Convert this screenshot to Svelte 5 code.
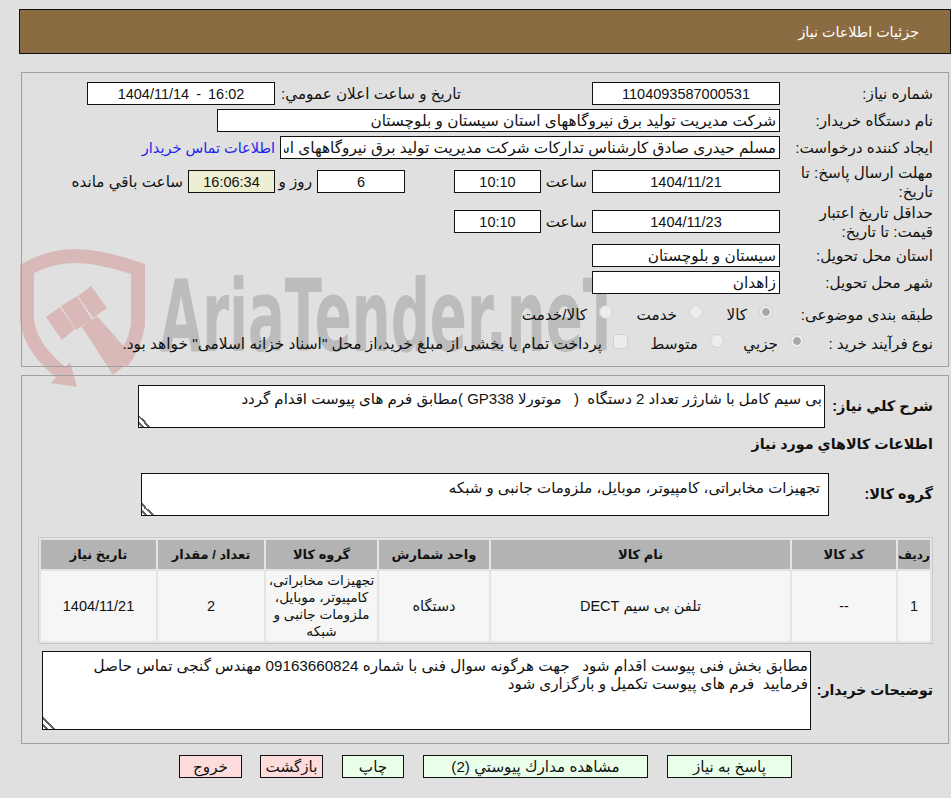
<script>
    const columns = [
        { title: 'ردیف', width: 32, lines: ['1'] },
        { title: 'کد کالا', width: 104, lines: ['--'] },
        { title: 'نام کالا', width: 299, lines: ['تلفن بی سیم DECT'] },
        { title: 'واحد شمارش', width: 110, lines: ['دستگاه'] },
        { title: 'گروه کالا', width: 111, lines: ['تجهیزات مخابراتی،', 'کامپیوتر، موبایل،', 'ملزومات جانبی و', 'شبکه'] },
        { title: 'تعداد / مقدار', width: 106, lines: ['2'] },
        { title: 'تاریخ نیاز', width: 115, lines: ['1404/11/21'] }
    ];

    const buttons = [
        { label: 'پاسخ به نیاز', width: 125, gap: 19, kind: 'green' },
        { label: 'مشاهده مدارك پيوستي (2)', width: 225, gap: 19, kind: 'green' },
        { label: 'چاپ', width: 62, gap: 19, kind: 'green' },
        { label: 'بازگشت', width: 63, gap: 18, kind: 'red' },
        { label: 'خروج', width: 63, gap: 0, kind: 'red' }
    ];

    const description = 'بی سیم کامل با شارژر تعداد 2 دستگاه  (   موتورلا GP338 )مطابق فرم های پیوست اقدام گردد';
    const group = 'تجهیزات مخابراتی، کامپیوتر، موبایل، ملزومات جانبی و شبکه';
    const notes = 'مطابق بخش فنی پیوست اقدام شود   جهت هرگونه سوال فنی با شماره 09163660824 مهندس گنجی تماس حاصل\nفرمایید  فرم های پیوست تکمیل و بارگزاری شود';
</script>

<svg class="watermark" viewBox="0 0 951 798" aria-hidden="true">
    <path class="shield" d="M75 256 Q50 256 27 269 L27 320 Q30 350 68 378 M75 256 Q100 256 138 269 L138 325 Q135 345 122 362" />
    <polygon class="mark" points="51,383 77,387 70,362" />
    <polygon class="mark" points="46,317 60,307 75,329 62,340" />
    <polygon class="mark" points="61,306 77,296 92,320 76,330" />
    <polygon class="mark" points="78,296 91,286 107,308 93,318" />
    <polygon class="mark" points="82,327 97,316 134,358 113,375" />
    <text class="brand" x="160" y="351" textLength="460" lengthAdjust="spacingAndGlyphs">AriaTender.neT</text>
</svg>

<main class="page">
    <header class="title">جزئیات اطلاعات نیاز</header>

    <section class="panel details">
        <div class="row">
            <span class="label">شماره نیاز:</span>
            <input class="field date" readonly value="1104093587000531" />
            <span class="public-label">تاریخ و ساعت اعلان عمومي:</span>
            <input class="field date ltr" readonly value="1404/11/14 - 16:02" />
        </div>
        <div class="row">
            <span class="label">نام دستگاه خریدار:</span>
            <input class="field start buyer" readonly value="شرکت مدیریت تولید برق نیروگاههای استان سیستان و بلوچستان" />
        </div>
        <div class="row">
            <span class="label">ایجاد کننده درخواست:</span>
            <input class="field start creator" readonly value="مسلم حیدری صادق کارشناس تدارکات شرکت مدیریت تولید برق نیروگاههای استان سیستان و بلوچستان" />
            <a class="contact" href="#contact">اطلاعات تماس خریدار</a>
        </div>
        <div class="row deadline">
            <span class="label">مهلت ارسال پاسخ: تا تاریخ:</span>
            <input class="field date" readonly value="1404/11/21" />
            <span class="hour">ساعت</span>
            <input class="field time" readonly value="10:10" />
            <input class="field days" readonly value="6" />
            <span class="days-label">روز و</span>
            <input class="field timer" readonly value="16:06:34" />
            <span class="remaining">ساعت باقي مانده</span>
        </div>
        <div class="row validity">
            <span class="label">حداقل تاریخ اعتبار قیمت: تا تاریخ:</span>
            <input class="field date" readonly value="1404/11/23" />
            <span class="hour">ساعت</span>
            <input class="field time" readonly value="10:10" />
        </div>
        <div class="row">
            <span class="label">استان محل تحویل:</span>
            <input class="field date start" readonly value="سیستان و بلوچستان" />
        </div>
        <div class="row">
            <span class="label">شهر محل تحویل:</span>
            <input class="field date start" readonly value="زاهدان" />
        </div>
        <div class="row category">
            <span class="label">طبقه بندی موضوعی:</span>
            <span class="option goods"><input type="radio" disabled checked /><span>کالا</span></span>
            <span class="option service"><input type="radio" disabled /><span>خدمت</span></span>
            <span class="option"><input type="radio" disabled /><span>کالا/خدمت</span></span>
        </div>
        <div class="row process">
            <span class="label process-label">نوع فرآیند خرید :</span>
            <span class="option small"><input type="radio" disabled checked /><span>جزیي</span></span>
            <span class="option medium"><input type="radio" disabled /><span>متوسط</span></span>
            <span class="option treasury"><input type="checkbox" disabled /><span>پرداخت تمام یا بخشی از مبلغ خرید،از محل "اسناد خزانه اسلامی" خواهد بود.</span></span>
        </div>
    </section>

    <section class="panel items">
        <div class="row desc-row">
            <span class="label bold desc-label">شرح كلي نياز:</span>
            <textarea class="box desc" readonly value={description}></textarea>
        </div>
        <h2>اطلاعات كالاهاي مورد نياز</h2>
        <div class="row group-row">
            <span class="label bold group-label">گروه کالا:</span>
            <textarea class="box group" readonly value={group}></textarea>
        </div>
        <table>
            <thead>
                <tr>
                    {#each columns as col}
                        <th style="width: {col.width}px">{col.title}</th>
                    {/each}
                </tr>
            </thead>
            <tbody>
                <tr>
                    {#each columns as col}
                        <td class:multi={col.lines.length > 1}>
                            {#each col.lines as line}
                                <div class="cell-line">{line}</div>
                            {/each}
                        </td>
                    {/each}
                </tr>
            </tbody>
        </table>
        <div class="row notes-row">
            <span class="label bold notes-label">توضیحات خریدار:</span>
            <textarea class="box notes" readonly value={notes}></textarea>
        </div>
    </section>

    <nav class="actions">
        {#each buttons as btn}
            <button class={btn.kind} style="width: {btn.width}px; margin-left: {btn.gap}px">{btn.label}</button>
        {/each}
    </nav>
</main>

<style>
    :global(body) {
        margin: 0;
        background-color: #e0e0e0;
    }

    .watermark {
        position: absolute;
        top: 0;
        left: 0;
        width: 951px;
        height: 798px;
    }

    .shield {
        fill: none;
        stroke: #d9b8b8;
        stroke-width: 14;
    }

    .mark {
        fill: #d9b8b8;
    }

    .brand {
        fill: #bcbcbc;
        font-family: "DejaVu Sans", sans-serif;
        font-weight: 700;
        font-size: 100px;
    }

    .page {
        position: relative;
        box-sizing: border-box;
        width: 951px;
        height: 798px;
        padding-top: 9px;
        direction: rtl;
        overflow: hidden;
        color: #111;
        font-family: "Liberation Sans", "DejaVu Sans", sans-serif;
        font-size: 15.2px;
    }

    .title {
        box-sizing: border-box;
        height: 45px;
        margin-left: 19px;
        padding-right: 31px;
        border: 1px solid #111;
        background-color: #8b6b41;
        color: white;
        font-size: 14.3px;
        line-height: 45px;
    }

    .panel {
        box-sizing: border-box;
        margin-left: 21px;
        margin-right: 2px;
        border: 1px solid #a0a0a0;
    }

    .details {
        height: 295px;
        margin-top: 18px;
        padding: 9px 15px 0 0;
    }

    .items {
        height: 369px;
        margin-top: 8px;
        padding: 9px 15px 0 0;
    }

    .row {
        display: flex;
        align-items: center;
        height: 23px;
        margin-bottom: 4px;
    }

    .label {
        flex: none;
        width: 148px;
        margin-left: 5px;
        line-height: 19px;
    }

    .bold {
        font-size: 14.5px;
        font-weight: 700;
        white-space: nowrap;
    }

    .field {
        box-sizing: border-box;
        height: 23px;
        padding: 0 3px;
        border: 1px solid #111;
        border-radius: 0;
        outline: none;
        background-color: white;
        color: #111;
        font: inherit;
        font-size: 14.5px;
        text-align: center;
        direction: rtl;
    }

    .start {
        font-size: 15.3px;
        text-align: right;
    }

    .ltr {
        direction: ltr;
        word-spacing: 3px;
    }

    .date {
        width: 188px;
    }

    .buyer {
        width: 563px;
    }

    .creator {
        width: 500px;
    }

    .public-label {
        width: 186px;
        margin-right: 131px;
        white-space: nowrap;
    }

    .contact {
        margin-right: 5px;
        color: #2222ee;
        font-size: 14.5px;
        text-decoration: none;
        white-space: nowrap;
    }

    .deadline {
        margin-top: 11px;
        margin-bottom: 17px;
    }

    .validity {
        margin-bottom: 11px;
    }

    .hour {
        width: 46px;
        margin-right: 5px;
    }

    .time {
        width: 87px;
    }

    .days {
        width: 88px;
        margin-right: 49px;
    }

    .days-label {
        width: 37px;
        margin-right: 5px;
    }

    .timer {
        width: 87px;
        background-color: #eeeed2;
    }

    .remaining {
        margin-right: 5px;
        white-space: nowrap;
    }

    .category {
        margin-top: 9px;
        margin-bottom: 6px;
    }

    .option {
        display: flex;
        flex: none;
        align-items: center;
        gap: 12px;
        box-sizing: border-box;
        white-space: nowrap;
    }

    .option input {
        flex: none;
        appearance: none;
        box-sizing: border-box;
        width: 14px;
        height: 14px;
        margin: 0 0 5px 0;
        border: 1px solid #cfcfcf;
        border-radius: 50%;
        background-color: #ececec;
    }

    .option input:checked {
        background: radial-gradient(circle, #a8a8a8 0 3.5px, #ececec 4px);
    }

    .option input[type="checkbox"] {
        width: 15px;
        height: 15px;
        border-radius: 3px;
    }

    .goods {
        width: 70px;
        margin-right: 7px;
    }

    .service {
        width: 90px;
    }

    .process-label {
        width: 129px;
        margin-left: 0;
    }

    .small {
        width: 80px;
    }

    .medium {
        width: 96px;
    }

    .treasury {
        gap: 11px;
        font-size: 15.4px;
    }

    .box {
        display: block;
        box-sizing: border-box;
        padding: 4px 2px 1px;
        border: 1px solid #111;
        border-radius: 0;
        outline: none;
        background-color: white;
        color: #111;
        font: inherit;
        font-size: 15px;
        line-height: 17.5px;
        direction: rtl;
    }

    .box::-webkit-resizer {
        background: linear-gradient(45deg, transparent 8%, #666 8% 18%, transparent 18% 30%, #666 30% 40%, transparent 40%);
    }

    .desc-row {
        height: 43px;
        margin-bottom: 0;
    }

    .desc-label {
        width: 103px;
        margin-left: 5px;
    }

    .desc {
        width: 687px;
        height: 43px;
    }

    h2 {
        margin: 7px 0 0 0;
        height: 38px;
        font-size: 14.3px;
        line-height: 18px;
    }

    .group-row {
        height: 43px;
        margin-bottom: 21px;
    }

    .group-label {
        width: 100px;
        margin-left: 4px;
    }

    .group {
        width: 688px;
        height: 43px;
        padding-right: 8px;
        padding-top: 5px;
    }

    table {
        table-layout: fixed;
        width: 895px;
        border: 1px solid #c8c8c8;
        border-spacing: 2px;
        background-color: #e4e4e4;
        font-size: 14.5px;
    }

    th {
        height: 29px;
        padding: 0;
        background-color: #b3b3b3;
        font-size: 13px;
        text-align: center;
    }

    th:first-child {
        font-size: 12px;
    }

    td {
        height: 70px;
        padding: 0;
        background-color: #f6f6f6;
        text-align: center;
    }

    td.multi {
        font-size: 13.6px;
    }

    .cell-line {
        line-height: 17px;
        white-space: nowrap;
    }

    .notes-row {
        height: 79px;
        margin-top: 7px;
        margin-bottom: 0;
    }

    .notes-label {
        width: 117px;
        margin-left: 5px;
        font-size: 14px;
    }

    .notes {
        width: 769px;
        height: 79px;
        padding-top: 5px;
        font-size: 15.2px;
    }

    .actions {
        display: flex;
        margin-top: 11px;
        padding-right: 159px;
    }

    button {
        box-sizing: border-box;
        height: 23px;
        padding: 0;
        border: 1px solid #111;
        border-radius: 0;
        color: #111;
        font: inherit;
    }

    .green {
        background-color: #eaffea;
    }

    .red {
        background-color: #ffdcdc;
    }
</style>
